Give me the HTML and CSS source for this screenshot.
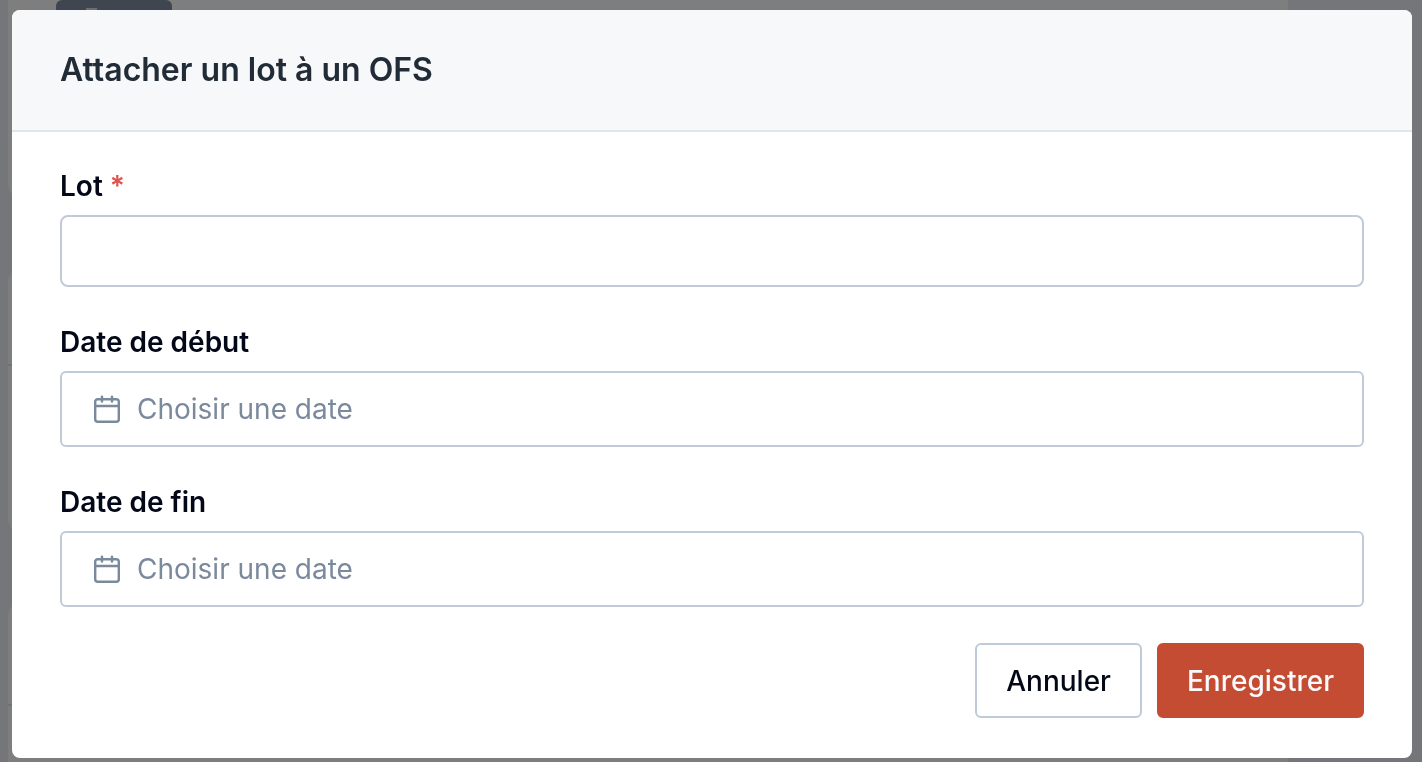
FILE: index.html
```html
<!DOCTYPE html>
<html lang="fr">
<head>
  <meta charset="UTF-8">
  <meta name="viewport" content="width=device-width, initial-scale=1.0">
  <title>Attacher un lot à un OFS</title>
  <link rel="stylesheet" href="styles.css">
</head>
<body>
  <div class="page" aria-hidden="true">
    <div class="panel panel-top">
      <div class="panel-action"><span class="panel-action-icon"></span></div>
    </div>
    <div class="panel panel-split"></div>
    <div class="panel panel-split panel-tall"></div>
  </div>

  <div class="overlay">
    <div class="dialog" role="dialog" aria-modal="true" aria-labelledby="dialog-title">
      <div class="dialog-header">
        <h1 id="dialog-title">Attacher un lot à un OFS</h1>
      </div>

      <form class="dialog-body">
        <div class="form-group">
          <label for="lot">Lot <span class="required">*</span></label>
          <input id="lot" type="text" required>
        </div>

        <div class="form-group">
          <label for="start-date">Date de début</label>
          <button type="button" id="start-date" class="date-button">
            <svg width="32" height="32" viewBox="0 0 32 32" fill="none" stroke="currentColor" stroke-width="2.4" stroke-linecap="round" stroke-linejoin="round">
              <rect x="4.2" y="6.2" width="23.6" height="22.6" rx="2.6"></rect>
              <line x1="4.2" y1="13" x2="27.8" y2="13"></line>
              <line x1="11" y1="3.6" x2="11" y2="8.6"></line>
              <line x1="21" y1="3.6" x2="21" y2="8.6"></line>
            </svg>
            <span>Choisir une date</span>
          </button>
        </div>

        <div class="form-group">
          <label for="end-date">Date de fin</label>
          <button type="button" id="end-date" class="date-button">
            <svg width="32" height="32" viewBox="0 0 32 32" fill="none" stroke="currentColor" stroke-width="2.4" stroke-linecap="round" stroke-linejoin="round">
              <rect x="4.2" y="6.2" width="23.6" height="22.6" rx="2.6"></rect>
              <line x1="4.2" y1="13" x2="27.8" y2="13"></line>
              <line x1="11" y1="3.6" x2="11" y2="8.6"></line>
              <line x1="21" y1="3.6" x2="21" y2="8.6"></line>
            </svg>
            <span>Choisir une date</span>
          </button>
        </div>

        <div class="actions">
          <button type="button" class="btn btn-outline">Annuler</button>
          <button type="submit" class="btn btn-primary">Enregistrer</button>
        </div>
      </form>
    </div>
  </div>
</body>
</html>
```
FILE: styles.css
```css
* {
  box-sizing: border-box;
}
body {
  margin: 0;
  min-height: 100vh;
  overflow: hidden;
  background-color: #ebecf2;
  font-family: Inter, "Liberation Sans", sans-serif;
  font-size: 28px;
  color: #020817;
}

/* Page behind the dialog */
.page {
  position: fixed;
  inset: 0;
  display: flex;
  flex-direction: column;
  gap: 66px;
  padding: 0 134px 0 8px;
}
.panel {
  flex: none;
  height: 268px;
  border-radius: 16px;
  background-color: #fcfcfc;
}
.panel-top {
  height: 200px;
  padding-left: 48px;
  border-radius: 0 0 16px 16px;
}
.panel-action {
  width: 116px;
  height: 40px;
  padding: 8px 30px;
  border-radius: 6px;
  background-color: #7e8ca0;
}
.panel-action-icon {
  display: block;
  width: 11px;
  height: 4px;
  background-color: #dddddd;
}
.panel-split::before {
  content: "";
  display: block;
  height: 98px;
  border-bottom: 2px solid #e2e4ea;
}
.panel-tall::before {
  height: 104px;
}

.overlay {
  position: fixed;
  inset: 0;
  padding: 10px 10px 4px 12px;
  overflow: auto;
  background-color: rgba(0, 0, 0, 0.5);
}
.dialog {
  background-color: white;
  border-radius: 8px;
  overflow: hidden;
}
.dialog-header {
  padding: 40px 48px;
  background-color: #f7f8fa;
  border-bottom: 2px solid #e1e5ee;
}
.dialog-header h1 {
  margin: 0;
  font-size: 32px;
  line-height: 40px;
  font-weight: 600;
  color: #222c37;
}
.dialog-body {
  display: flex;
  flex-direction: column;
  gap: 36px;
  padding: 35px 48px 40px;
}
.form-group {
  display: flex;
  flex-direction: column;
  gap: 10px;
}
label {
  line-height: 38px;
  font-weight: 600;
}
.required {
  color: #e0524c;
}
input,
button {
  font: inherit;
  color: inherit;
  border: 2px solid #c0cbd9;
  border-radius: 6px;
  background-color: white;
}
input {
  width: 100%;
  height: 72px;
  padding: 0 24px;
  border-radius: 8px;
}
button {
  height: 75px;
  cursor: pointer;
}
.date-button {
  display: flex;
  align-items: center;
  gap: 14px;
  width: 100%;
  height: 76px;
  padding: 0 29px;
  color: #7b899d;
}
.actions {
  display: flex;
  justify-content: flex-end;
  gap: 15px;
}
.btn {
  padding: 0 29px;
  font-weight: 500;
}
.btn-primary {
  padding: 0 28px;
  border-color: #c44c33;
  background-color: #c44c33;
  color: #f9fafc;
}
```
